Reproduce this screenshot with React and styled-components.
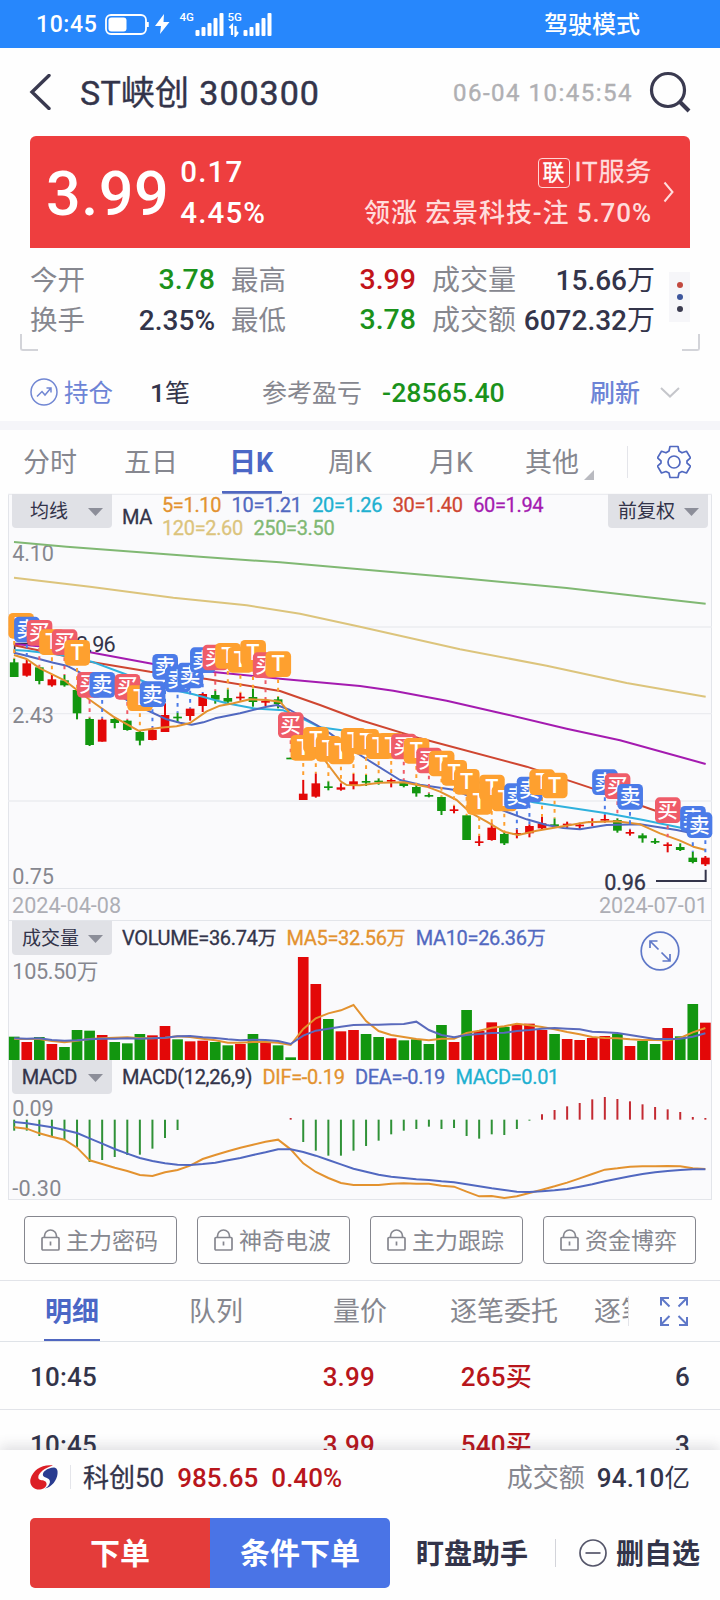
import React from 'react'
import styled, { createGlobalStyle } from 'styled-components';

const GlobalStyle = createGlobalStyle`
    * { box-sizing : border-box; }
    body {
        margin : 0;
        background : #fff;
        font-family : Roboto, "Noto Sans CJK SC", sans-serif;
        color : #33344a;
    }
`

const Page = styled.div`
    width : 720px;
    height : 1600px;
    overflow : hidden;
    display : flex;
    flex-direction : column;
    background : #fefefe;
`

const Txt = styled.span`
    font-size : ${p => p.$size || 26}px;
    font-weight : ${p => p.$weight || 400};
    color : ${p => p.$color || '#33344a'};
    letter-spacing : ${p => p.$ls || 0}px;
    line-height : ${p => p.$lh || 1.2};
    margin-left : ${p => p.$ml || 0}px;
    padding-top : ${p => p.$pt || 0}px;
    -webkit-text-stroke : ${p => p.$stroke || 0}px currentColor;
    white-space : nowrap;
    flex : none;
`

/* ---------- status bar ---------- */
const StatusBar = styled.div`
    height : 48px;
    flex : none;
    background : #2787fc;
    display : flex;
    align-items : center;
    padding : 0 80px 0 36px;
    svg { margin-left : 8px; flex : none; }
`
const Spacer = styled.div`
    flex : 1;
`

/* ---------- header ---------- */
const Header = styled.div`
    height : 88px;
    flex : none;
    display : flex;
    align-items : center;
    padding : 0 29px 0 29px;
`
const SearchIcon = styled.svg`
    margin-left : 16px;
    flex : none;
`

/* ---------- red banner ---------- */
const Banner = styled.div`
    height : 112px;
    flex : none;
    margin : 0 30px;
    border-radius : 6px 6px 0 0;
    background : #ee3e3f;
    display : flex;
    align-items : center;
    padding : 0 16px 0 16px;
`
const BannerCol = styled.div`
    display : flex;
    flex-direction : column;
    align-items : ${p => p.$end ? 'flex-end' : 'flex-start'};
    margin-left : ${p => p.$ml || 0}px;
    padding-top : 2px;
    & > * { height : 41px; display : flex; align-items : center; }
`
const LinkTag = styled.span`
    width : 32px;
    height : 30px;
    border : 1px solid #ffd6d6;
    border-radius : 4px;
    color : #fff;
    font-size : 22px;
    line-height : 28px;
    text-align : center;
    letter-spacing : 0;
    margin-right : 5px;
`

/* ---------- quote stats ---------- */
const Stats = styled.div`
    height : 103px;
    flex : none;
    padding : 12px 20px 0 20px;
    display : grid;
    grid-template-columns : 195px 201px 239px 1fr;
    grid-template-rows : 40px 40px 11px;
`
const Stat = styled.div`
    display : flex;
    align-items : center;
    justify-content : space-between;
    padding-top : 1px;
    padding-left : ${p => p.$pl}px;
`
const More = styled.div`
    grid-column : 4;
    grid-row : 1 / 3;
    margin : 12px 0 0 14px;
    width : 21px;
    height : 50px;
    background : #f6f6f9;
    display : flex;
    flex-direction : column;
    align-items : center;
    justify-content : center;
    gap : 6px;
`
const Dot = styled.i`
    width : 6px;
    height : 6px;
    border-radius : 50%;
    background : ${p => p.$color};
`
const Corner = styled.div`
    grid-row : 3;
    grid-column : ${p => p.$right ? 4 : 1};
    justify-self : ${p => p.$right ? 'end' : 'start'};
    width : 18px;
    height : 17px;
    margin-top : -6px;
    border-bottom : 2px solid #d3d4d9;
    border-${p => p.$right ? 'right' : 'left'} : 2px solid #d3d4d9;
    border-bottom-${p => p.$right ? 'right' : 'left'}-radius : 3px;
`

/* ---------- position row ---------- */
const Position = styled.div`
    height : 70px;
    flex : none;
    display : flex;
    align-items : center;
    padding : 12px 40px 0 30px;
    svg { flex : none; }
`
const Divider = styled.div`
    height : 9px;
    flex : none;
    background : #f5f5f9;
`

/* ---------- period tabs ---------- */
const Periods = styled.div`
    height : 64px;
    flex : none;
    display : flex;
    padding-left : 23px;
    align-items : stretch;
`
const Period = styled.div`
    width : ${p => p.$w}px;
    display : flex;
    svg { margin : 40px 0 0 5px; }
`
const PeriodLabel = styled.span`
    font-size : 27px;
    line-height : 56px;
    padding : 5px ${p => p.$on ? '9px 0 7px' : 0};
    padding-bottom : 0;
    white-space : nowrap;
    color : ${p => p.$on ? '#4b67c6' : '#86878f'};
    font-weight : ${p => p.$on ? 700 : 400};
    border-bottom : ${p => p.$on ? '3px solid #5067c0' : 'none'};
    border-radius : 1px;
`
const VLine = styled.div`
    width : ${p => p.$w || 1}px;
    height : ${p => p.$h}px;
    background : ${p => p.$color || '#e4e5ea'};
    margin-left : ${p => p.$ml || 0}px;
    flex : none;
    align-self : center;
`

/* ---------- charts ---------- */
const Charts = styled.div`
    margin : 0 8px;
    flex : none;
    height : 706px;
    display : flex;
    flex-direction : column;
    background : #fafafc;
    border : 0 solid #e3e5ea;
    border-width : 0 1px 1px 1px;
`
const Panel = styled.div`
    height : ${p => p.$h}px;
    display : grid;
    grid-template-columns : 100%;
    & > * { grid-area : 1 / 1; }
    & > svg { margin-left : -1px; overflow : visible; z-index : 1; }
`
const Legend = styled.div`
    display : flex;
    align-items : flex-start;
    align-self : start;
    padding : 0 3px;
    z-index : 1;
`
const Select = styled.div`
    width : 100px;
    height : 34px;
    flex : none;
    border-radius : 0 0 4px 4px;
    background : #e0e1e6;
    display : flex;
    align-items : center;
    justify-content : flex-end;
    padding-top : 1px;
    padding-right : 9px;
    gap : ${p => p.$gap || 20}px;
    font-size : 19px;
    line-height : 32px;
`
const Values = styled.div`
    display : flex;
    flex-wrap : wrap;
    width : ${p => p.$w}px;
    column-gap : 10.500px;
    margin-left : ${p => p.$ml || 0}px;
    padding-top : ${p => p.$pt || 0}px;
`
const Value = styled.span`
    font-size : 20px;
    line-height : 23px;
    letter-spacing : -.35px;
    white-space : nowrap;
    color : ${p => p.$color || '#33344a'};
    -webkit-text-stroke : .3px ${p => p.$color || '#33344a'};
    small { font-size : 19px; }
`
const Dates = styled.div`
    height : 33px;
    display : flex;
    justify-content : space-between;
    align-items : center;
    padding : 2px 3px 0 3px;
    border-top : 1px solid #e3e5ea;
    border-bottom : 1px solid #e3e5ea;
`
const Expand = styled.svg`
    margin-left : auto;
    margin-right : 28px;
    margin-top : 10px;
`

/* ---------- locked tools ---------- */
const Tools = styled.div`
    height : 80px;
    flex : none;
    display : flex;
    gap : 20px;
    padding : 16px 24px 0 24px;
`
const Tool = styled.div`
    width : 153px;
    height : 48px;
    border : 1px solid #85868e;
    border-radius : 4px;
    display : flex;
    align-items : center;
    justify-content : center;
    gap : 6px;
    padding-right : 2px;
`

/* ---------- detail tabs and trades ---------- */
const DetailTabs = styled.div`
    height : 62px;
    flex : none;
    border-top : 1px solid #e2e4e9;
    border-bottom : 1px solid #dfe3e8;
    display : flex;
    padding-left : 44px;
    overflow : hidden;
`
const DetailTab = styled.div`
    width : ${p => p.$w}px;
    overflow : hidden;
`
const DetailLabel = styled.span`
    display : inline-block;
    height : 61px;
    line-height : 58px;
    padding : 2px ${p => p.$on ? 1 : 0}px 0;
    font-size : 27px;
    white-space : nowrap;
    color : ${p => p.$on ? '#4b67c6' : '#86878f'};
    font-weight : ${p => p.$on ? 700 : 400};
    border-bottom : ${p => p.$on ? '3px solid #5067c0' : 'none'};
`
const Trades = styled.div`
    height : 108px;
    flex : none;
    overflow : hidden;
`
const Trade = styled.div`
    height : 68px;
    border-bottom : 1px solid #e2e4e9;
    display : grid;
    grid-template-columns : 100px 245px 157px 1fr;
    align-items : center;
    padding : 2px 30px 0 30px;
`
const Cell = styled.div`
    font-size : 26px;
    font-weight : 500;
    line-height : 32px;
    letter-spacing : .2px;
    text-align : ${p => p.$align || 'right'};
    color : ${p => p.$color || '#33344a'};
`

/* ---------- bottom bar ---------- */
const Bottom = styled.div`
    flex : 1;
    background : #fefefe;
    box-shadow : 0 -4px 12px rgba(60,60,80,0.16);
    z-index : 2;
`
const IndexRow = styled.div`
    height : 54px;
    display : flex;
    align-items : center;
    padding : 0 30px;
`
const Actions = styled.div`
    height : 70px;
    margin-top : 14px;
    padding-left : 30px;
    display : flex;
    align-items : center;
`
const Order = styled.div`
    width : 180px;
    height : 70px;
    background : ${p => p.$blue ? '#4a74e6' : '#e43c3a'};
    border-radius : ${p => p.$blue ? '0 5px 5px 0' : '5px 0 0 5px'};
    color : #fff;
    font-size : 30px;
    font-weight : 700;
    text-align : center;
    line-height : 71px;
`

const RED = '#e30808';
const GREEN = '#12960f';
const barX = i => 42.6 + 37.7 * i;

// [up, body top, body bottom, high, low]
const candles = [
    [0,517,561,506,561],[1,520,557,508,560],[0,532,573,530,583],[1,568,586,555,590],[0,571,586,555,590],
    [0,600,670,600,688],[0,687,765,683,768],[1,689,755,685,755],[0,687,699,683,715],[0,692,720,690,722],
    [0,726,752,722,766],[1,720,750,712,751],[1,675,726,640,726],[0,680,684,668,698],[1,656,678,655,692],
    [1,612,648,609,666],[0,615,629,603,641],[0,624,635,598,640],[1,620,624,608,632],[0,621,636,596,650],
    [1,633,638,625,648],[0,628,642,620,655],[0,803,807,803,807],[1,911,930,870,930],[1,880,920,850,923],
    [0,889,893,874,901],[1,892,899,880,902],[1,874,888,852,898],[0,873,877,855,888],[0,872,876,865,884],
    [1,870,875,866,892],[0,877,888,870,892],[0,891,910,885,920],[0,915,919,910,922],[0,921,963,920,975],
    [1,958,963,947,970],[0,976,1050,976,1050],[1,1054,1059,1037,1068],[1,1013,1050,1000,1052],[0,1032,1060,1025,1065],
    [1,1029,1033,1018,1045],[1,1008,1030,1003,1042],[1,1000,1015,980,1018],[0,1003,1008,985,1012],[1,1001,1005,995,1015],
    [1,1004,1008,998,1018],[1,994,998,985,1008],[1,987,991,975,998],[0,990,1022,985,1028],[1,1026,1030,1018,1037],
    [0,1036,1045,1030,1058],[0,1053,1056,1045,1062],[1,1063,1067,1058,1087],[0,1071,1080,1060,1083],[0,1103,1116,1085,1120],
    [1,1103,1123,1098,1128],
]

const maLines = [
    ['#80b873', '42,156 200,170 600,200 840,217 1080,238 1380,264 1700,294 1930,320 2117,341'],
    ['#dcc47c', '42,263 270,290 520,323 740,346 900,371 1080,410 1380,478 1640,527 1880,579 2117,620'],
    ['#a41bb0', '42,462 150,472 270,487 460,522 640,546 840,566 1080,588 1180,602 1340,632 1510,671 1700,716 1860,751 2117,822'],
    ['#cf4631', '42,466 150,488 270,515 450,545 620,567 840,603 960,645 1080,690 1260,745 1580,830 1770,893 1960,960 2117,1012'],
    ['#2fb1dd', '42,480 80,482 180,494 275,515 375,552 450,582 520,600 580,613 680,640 760,655 850,661 900,682 960,712 1020,720 1150,740 1260,775 1400,860 1510,910 1600,937 1820,970 1930,990 2050,1015 2117,1030'],
    ['#5168c0', '42,488 80,497 160,518 200,527 235,545 380,630 440,660 500,688 540,698 575,704 610,697 645,685 720,670 800,650 830,645 870,660 950,705 990,730 1080,795 1200,870 1260,884 1360,899 1510,962 1580,988 1640,1005 1690,1014 1740,1018 1820,1005 1920,1003 2030,1020 2117,1038'],
    ['#e3922f', '42,495 80,507 120,535 195,572 270,630 340,680 415,722 480,713 530,709 570,699 620,664 660,647 700,640 750,628 800,630 840,635 870,670 960,790 985,825 1023,875 1040,885 1080,886 1140,878 1210,877 1280,890 1320,905 1370,930 1410,967 1460,995 1510,1025 1555,1035 1610,1022 1680,1010 1760,997 1850,994 1920,1003 1980,1030 2040,1052 2080,1070 2117,1080'],
]

// [bar, kind, top]
const marks = [
    [0,'T',369],[1,'卖',380],[2,'买',390],[3,'T',418],[4,'买',418],[5,'T',450],[6,'买',546],[7,'卖',546],
    [9,'买',552],[10,'T',586],[11,'卖',574],[12,'卖',492],[13,'卖',530],[14,'卖',518],[15,'卖',472],[16,'买',464],
    [17,'T',459],[18,'T',471],[19,'T',450],[20,'买',487],[21,'T',484],[22,'买',667],[23,'T',735],[24,'T',711],
    [25,'T',738],[26,'T',746],[27,'T',714],[28,'T',717],[29,'T',730],[30,'T',729],[31,'买',731],[32,'T',744],
    [33,'买',773],[34,'T',782],[35,'T',810],[36,'T',837],[37,'T',897],[38,'T',854],[39,'T',887],[40,'卖',880],
    [41,'卖',860],[42,'T',838],[43,'T',848],[47,'卖',838],[48,'买',850],[49,'卖',882],[52,'买',922],[54,'卖',948],
    [55,'卖',967],
]
const markColor = { 'T' : '#fea02f', '卖' : '#4b7be8', '买' : '#ef5c69' };

const volumes = [
    [0,560],[1,576],[0,561],[1,582],[0,591],[0,540],[0,542],[1,555],[0,576],[0,580],[0,552],[1,556],[1,528],[0,568],
    [1,574],[1,572],[0,576],[0,586],[1,582],[0,552],[1,576],[0,586],[0,622],[1,321],[1,402],[0,507],[1,544],[1,540],
    [0,552],[0,561],[1,565],[0,571],[0,568],[0,582],[0,525],[1,576],[0,480],[1,543],[1,517],[0,531],[1,525],[1,521],
    [1,540],[0,552],[1,567],[1,570],[1,564],[1,558],[0,551],[1,588],[0,573],[0,582],[1,534],[0,559],[0,462],[1,518],
]
const volMa5 = [567,567,567,573,577,572,567,565,563,562,565,565,563,559,561,566,571,578,578,576,576,578,585,537,505,490,481,465,513,543,555,561,567,571,566,566,549,542,533,529,521,526,531,538,546,553,561,564,565,568,570,570,571,564,547,534];
const volMa10 = [565,566,565,570,572,571,568,566,566,565,566,565,563,559,558,562,564,568,571,569,570,573,582,557,542,536,530,525,524,524,523,522,515,540,555,562,555,552,549,548,543,540,536,534,536,538,545,547,549,555,561,567,567,566,560,550];

const macd = [842,842,858,861,870,891,936,930,921,915,914,896,864,840,0,0,0,0,0,0,0,0,804,876,902,917,917,902,888,872,853,842,837,830,837,834,858,866,853,855,837,812,793,780,769,759,748,741,747,754,763,771,778,786,801,804];
const dif = [832,836,850,860,869,893,931,942,953,963,975,978,967,960,947,927,915,904,893,884,875,869,898,940,966,984,999,1005,1005,1005,1001,1000,1001,1001,1007,1010,1025,1039,1038,1044,1039,1029,1019,1009,998,985,972,959,955,950,949,949,948,949,955,957];
const dea = [816,820,826,832,840,849,865,881,897,911,924,933,940,944,945,942,938,931,924,915,907,898,898,906,917,930,943,956,965,974,980,984,988,990,994,997,1003,1009,1015,1020,1025,1026,1024,1021,1017,1010,1003,994,986,979,972,967,963,960,958,958];

const toPoints = list => list.map((y, i) => `${barX(i)},${y}`).join(' ');

const clampMark = x => Math.min(Math.max(x - 38, 25), 2060);

function KChart() {
    return <svg width="704" height="394" viewBox="24 12 2112 1182">
        {[13, 411, 671, 933].map(y => <line key={y} x1="24" x2="2136" y1={y} y2={y} stroke="#ebecf0" strokeWidth="4" />)}
        <g fontSize="65" fill="#86878f">
            <text x="37" y="213" textLength="125">4.10</text>
            <text x="37" y="698" textLength="125">2.43</text>
            <text x="37" y="1181" textLength="125">0.75</text>
        </g>
        <path d="M44 461H225M44 461v30" stroke="#33344a" strokeWidth="5" fill="none" />
        {candles.map(([up, top, bottom, high, low], i) => <g key={i} fill={up ? RED : GREEN}>
            <rect x={barX(i) - 13} width="26" y={top} height={Math.max(bottom - top, 5)} />
            <rect x={barX(i) - 3} width="6" y={high} height={low - high} />
        </g>)}
        {maLines.map(([color, points]) => <polyline key={color} points={points} fill="none" stroke={color} strokeWidth="6" strokeLinejoin="round" />)}
        <text x="228" y="487" fontSize="65" fill="#33344a" textLength="119">3.96</text>
        {marks.map(([i, kind, top]) => <line key={i} x1={barX(i)} x2={barX(i)} y1={top + 84} y2={candles[i][3]}
            stroke={markColor[kind]} strokeWidth="6" strokeDasharray="11 14" />)}
        {marks.map(([i, kind, top]) => <g key={i}>
            <rect x={clampMark(barX(i))} y={top} width="77" height="77" rx="14" fill={markColor[kind]} />
            <text x={clampMark(barX(i)) + 38} y={top + (kind === 'T' ? 60 : 61)} fontSize={kind === 'T' ? 65 : 62} fontWeight="500"
                textAnchor="middle" fill="#fff">{kind}</text>
        </g>)}
        <path d="M1968 1173H2117V1139" stroke="#33344a" strokeWidth="6" fill="none" />
        <text x="1813" y="1199" fontSize="65" fill="#33344a" stroke="#33344a" textLength="125">0.96</text>
    </svg>
}

function VolumeChart() {
    return <svg width="704" height="139" viewBox="24 213 2112 417">
        <text x="37" y="388" fontSize="65" fill="#86878f" textLength="258">105.50万</text>
        {volumes.map(([up, top], i) => <rect key={i} x={barX(i) - 16} width="32" y={top} height={630 - top} fill={up ? RED : GREEN} />)}
        <polyline points={toPoints(volMa5)} fill="none" stroke="#e3922f" strokeWidth="6" />
        <polyline points={toPoints(volMa10)} fill="none" stroke="#5a6abc" strokeWidth="6" />
    </svg>
}

function MacdChart() {
    return <svg width="704" height="140" viewBox="24 630 2112 420">
        <g fontSize="65" fill="#86878f">
            <text x="37" y="798" textLength="124">0.09</text>
            <text x="37" y="1038" textLength="147">-0.30</text>
        </g>
        {macd.map((end, i) => end > 0 && <line key={i} x1={barX(i)} x2={barX(i)} y1="809" y2={end} stroke={end < 809 ? '#c32a32' : '#2f9137'} strokeWidth="6" />)}
        <polyline points={toPoints(dif)} fill="none" stroke="#e3922f" strokeWidth="6" />
        <polyline points={toPoints(dea)} fill="none" stroke="#5168c0" strokeWidth="6" />
    </svg>
}

const Arrow = () => <svg width="15" height="8" viewBox="0 0 15 8"><path d="M0 0H15L7.500 8Z" fill="#8c8e99" /></svg>

const Lock = () => <svg width="19" height="22" viewBox="0 0 19 22" fill="none" stroke="#86878f" strokeWidth="1.7">
    <rect x="1" y="8.500" width="17" height="12.500" rx="1" />
    <path d="M3.500 8.500V7a6 6 0 0 1 12 0V8.500M9.500 12.500v4" />
</svg>

const Signal = () => <g fill="#fff">
    <rect x="0" y="17" width="4" height="6" rx="1" />
    <rect x="6" y="14" width="4" height="9" rx="1" />
    <rect x="12" y="10" width="4" height="13" rx="1" />
    <rect x="18" y="5" width="4" height="18" rx="1" />
    <rect x="24" y="0" width="4" height="23" rx="1" />
</g>

const periods = [['分时', 101], ['五日', 98], ['日K', 106], ['周K', 101], ['月K', 96], ['其他', 100]];
const tabs = [['明细', 145], ['队列', 144], ['量价', 117], ['逐笔委托', 144], ['逐笔明细', 34]];
const trades = [['10:45', '3.99', '265买', '6'], ['10:45', '3.99', '540买', '3']];

function App() {
    return <Page>
        <GlobalStyle />
        <StatusBar>
            <Txt $size={23} $weight={500} $color="#fff" $ls={.6} $pt={1}>10:45</Txt>
            <svg width="44" height="21" viewBox="0 0 44 21">
                <rect x="1" y="1" width="40" height="19" rx="5" fill="none" stroke="#fff" strokeWidth="1.8" />
                <rect x="3.500" y="3.500" width="18" height="14" rx="3" fill="#fff" />
                <path d="M42.500 8v5" stroke="#fff" strokeWidth="2.500" />
            </svg>
            <svg width="16" height="20" viewBox="0 0 16 20" style={{ marginLeft : 6 }}><path d="M9 0L0 12H6L5 20L14.500 8H8.500Z" fill="#fff" /></svg>
            <svg width="96" height="26" viewBox="0 0 96 26" fill="#fff">
                <text x=".5" y="10" fontSize="11.500" fontWeight="500">4G</text>
                <g transform="translate(16.500 2)"><Signal /></g>
                <text x="48.500" y="10" fontSize="11.500" fontWeight="500">5G</text>
                <path d="M50.500 17l2.500-2.500V24M59 21L56.500 24.500V15" fill="none" stroke="#fff" strokeWidth="2.200" />
                <g transform="translate(64.500 2)"><Signal /></g>
            </svg>
            <Spacer />
            <Txt $size={24} $color="#fff" $weight={500} $pt={2}>驾驶模式</Txt>
        </StatusBar>

        <Header>
            <svg width="22" height="36" viewBox="0 0 22 36"><path d="M20 1.500L3 18L20 34.500" fill="none" stroke="#3a3a50" strokeWidth="3.400" strokeLinecap="round" /></svg>
            <Txt $size={34} $ml={29} $pt={2} $ls={.2} $stroke={.4}>ST峡创</Txt>
            <Txt $size={34} $ml={10} $ls={1} $pt={2} $stroke={.5}>300300</Txt>
            <Spacer />
            <Txt $size={24} $color="#b0b0b3" $ls={1.5} $pt={3} $stroke={.4}>06-04 10:45:54</Txt>
            <SearchIcon width="42" height="42" viewBox="0 0 42 42" fill="none" stroke="#3a3a50" strokeWidth="3.200">
                <circle cx="19" cy="19" r="16.500" />
                <path d="M31 31L40 40" strokeWidth="4" />
            </SearchIcon>
        </Header>

        <Banner>
            <Txt $size={61} $color="#fff" $weight={500} $ls={.6} $pt={6}>3.99</Txt>
            <BannerCol $ml={11}>
                <Txt $size={29.5} $color="#fff" $ls={1.1} $weight={500}>0.17</Txt>
                <Txt $size={29.5} $color="#fff" $ls={1.1} $weight={500}>4.45%</Txt>
            </BannerCol>
            <Spacer />
            <BannerCol $end>
                <Txt $size={26} $color="#ffdcdc" $ls={.8} $stroke={.3}><LinkTag>联</LinkTag>IT服务</Txt>
                <Txt $size={26} $color="#ffdcdc" $weight={500} $ls={.9}>领涨&nbsp;宏景科技-注&nbsp;5.70%</Txt>
            </BannerCol>
            <svg width="11" height="22" viewBox="0 0 11 22" style={{ marginLeft : 11 }}><path d="M1.500 1.500L9.500 11L1.500 20.500" fill="none" stroke="#ffdcdc" strokeWidth="2" /></svg>
        </Banner>

        <Stats>
            <Stat $pl={10}><Txt $size={27.5} $color="#86878f">今开</Txt><Txt $size={28.5} $weight={500} $color="#1b921b">3.78</Txt></Stat>
            <Stat $pl={16}><Txt $size={27.5} $color="#86878f">最高</Txt><Txt $size={28.5} $weight={500} $color="#c2141a">3.99</Txt></Stat>
            <Stat $pl={16}><Txt $size={28} $color="#86878f">成交量</Txt><Txt $size={28} $weight={500}>15.66<Txt $size={28}>万</Txt></Txt></Stat>
            <Stat $pl={10}><Txt $size={27.5} $color="#86878f">换手</Txt><Txt $size={28} $weight={500}>2.35%</Txt></Stat>
            <Stat $pl={16}><Txt $size={27.5} $color="#86878f">最低</Txt><Txt $size={28.5} $weight={500} $color="#1b921b">3.78</Txt></Stat>
            <Stat $pl={16}><Txt $size={28} $color="#86878f">成交额</Txt><Txt $size={28} $weight={500}>6072.32<Txt $size={28}>万</Txt></Txt></Stat>
            <More><Dot $color="#c2493f" /><Dot $color="#3c559c" /><Dot $color="#3b3b50" /></More>
            <Corner />
            <Corner $right />
        </Stats>

        <Position>
            <svg width="28" height="28" viewBox="0 0 28 28" fill="none" stroke="#7187d3" strokeWidth="1.500">
                <circle cx="14" cy="14" r="13" />
                <path d="M7 18.500L12 13.500L15 17L20.500 10.500M16.500 10H21V14.500" />
            </svg>
            <Txt $size={24.5} $color="#6d84d6" $ml={6} $pt={3}>持仓</Txt>
            <Txt $size={26.5} $weight={500} $ml={37} $pt={2}>1<Txt $size={25}>笔</Txt></Txt>
            <Txt $size={25} $color="#86878f" $ml={72} $pt={3}>参考盈亏</Txt>
            <Txt $size={26.7} $weight={500} $color="#1b921b" $ml={20} $pt={2}>-28565.40</Txt>
            <Spacer />
            <Txt $size={25} $weight={500} $color="#6d84d6" $pt={3}>刷新</Txt>
            <svg width="20" height="11" viewBox="0 0 20 11" style={{ marginLeft : 20 }}><path d="M1 1L10 9.500L19 1" fill="none" stroke="#c5c6cb" strokeWidth="2" /></svg>
        </Position>
        <Divider />

        <Periods>
            {periods.map(([name, w], i) => <Period key={name} $w={w}>
                <PeriodLabel $on={i === 2}>{name}</PeriodLabel>
                {i === 5 && <svg width="10" height="10" viewBox="0 0 10 10"><path d="M10 0V10H0Z" fill="#b9bac0" /></svg>}
            </Period>)}
            <VLine $h={32} $ml={2} />
            <svg width="34" height="64" viewBox="0 0 34 64" fill="none" stroke="#5068c0" strokeWidth="1.700" strokeLinejoin="round" style={{ marginLeft : 29 }}>
                <path d="M13 16.500h8l1 4.500 3 1.800 4.500-1.500 4 6.500-3.500 3.200v2l3.500 3.200-4 6.800-4.500-1.500-3 1.500-1 4.500h-8l-1-4.500-3-1.500-4.500 1.500-4-6.800 3.500-3.200v-2L.500 27.800l4-6.500L9 22.800l3-1.800Z" />
                <circle cx="17" cy="32" r="6" />
            </svg>
        </Periods>

        <Charts>
            <Panel $h={394}>
                <KChart />
                <Legend>
                    <Select>均线<Arrow /></Select>
                    <Values $ml={10} $pt={12}><Value>MA</Value></Values>
                    <Values $w={430} $ml={10}>
                        <Value $color="#e3922f">5=1.10</Value>
                        <Value $color="#5168c0">10=1.21</Value>
                        <Value $color="#20b0d0">20=1.26</Value>
                        <Value $color="#cf4631">30=1.40</Value>
                        <Value $color="#a41bb0">60=1.94</Value>
                        <Value $color="#dcc47c">120=2.60</Value>
                        <Value $color="#80b873">250=3.50</Value>
                    </Values>
                    <Spacer />
                    <Select $gap={9}>前复权<Arrow /></Select>
                </Legend>
            </Panel>
            <Dates>
                <Txt $size={21.6} $color="#adaeb5">2024-04-08</Txt>
                <Txt $size={21.6} $color="#adaeb5">2024-07-01</Txt>
            </Dates>
            <Panel $h={139}>
                <VolumeChart />
                <Legend>
                    <Select $gap={9}>成交量<Arrow /></Select>
                    <Values $ml={10} $w={450} $pt={6}>
                        <Value>VOLUME=36.74<small>万</small></Value>
                        <Value $color="#e3922f">MA5=32.56<small>万</small></Value>
                        <Value $color="#5168c0">MA10=26.36<small>万</small></Value>
                    </Values>
                    <Expand width="40" height="40" viewBox="0 0 40 40" fill="none" stroke="#5f78c8" strokeWidth="1.700">
                        <circle cx="20" cy="20" r="18.800" />
                        <path d="M18.500 18.500L10 10M10 17V10H17.500M21.500 21.500L30 30M30 23V30H22.500" />
                    </Expand>
                </Legend>
            </Panel>
            <Panel $h={139}>
                <MacdChart />
                <Legend>
                    <Select $gap={11}><Value>MACD</Value><Arrow /></Select>
                    <Values $ml={10} $w={480} $pt={6}>
                        <Value>MACD(12,26,9)</Value>
                        <Value $color="#e3922f">DIF=-0.19</Value>
                        <Value $color="#5168c0">DEA=-0.19</Value>
                        <Value $color="#20b0d0">MACD=0.01</Value>
                    </Values>
                </Legend>
            </Panel>
        </Charts>

        <Tools>
            {['主力密码', '神奇电波', '主力跟踪', '资金博弈'].map(name => <Tool key={name}>
                <Lock />
                <Txt $size={23} $color="#86878f" $pt={3}>{name}</Txt>
            </Tool>)}
        </Tools>

        <DetailTabs>
            {tabs.map(([name, w], i) => <DetailTab key={name} $w={w}>
                <DetailLabel $on={i === 0}>{name}</DetailLabel>
            </DetailTab>)}
            <VLine $h={30} />
            <svg width="28" height="60" viewBox="0 0 28 60" fill="none" stroke="#5f78c8" strokeWidth="2" style={{ marginLeft : 31 }}>
                <path d="M9.500 25.500L1 17M1 24.500V17H9M18.500 25.500L27 17M19 17H27V24.500M9.500 35L1 43.500M1 36V44H9M18.500 35L27 43.500M19 44H27V36" />
            </svg>
        </DetailTabs>
        <Trades>
            {trades.map(([time, price, amount, count]) => <Trade key={amount}>
                <Cell $align="left">{time}</Cell>
                <Cell $color="#b8161c">{price}</Cell>
                <Cell $color="#b8161c">{amount}</Cell>
                <Cell>{count}</Cell>
            </Trade>)}
        </Trades>

        <Bottom>
            <IndexRow>
                <svg width="28" height="25" viewBox="0 0 28 25">
                    <path d="M23 .500C12-1 3 5 .500 14C-1 20 4 25 10 24.500C16 24 18 19 15.500 16.500C13 14.500 10 16 8.500 13.500C7 9 14 3 23 .500Z" fill="#dc1f26" />
                    <path d="M24 2.500C17 3 12 7 13 10.500C14 13 17.500 12 19.500 15C21 18 18 22 15 23.500C22 22 27 15 27.500 9C28 5.500 27 3 24 2.500Z" fill="#2a3c90" />
                </svg>
                <VLine $h={24} $ml={12} />
                <Txt $size={26} $ml={12} $pt={3} $stroke={.3}>科创50</Txt>
                <Txt $size={26} $weight={500} $color="#b8161c" $ml={13} $pt={3}>985.65</Txt>
                <Txt $size={26} $weight={500} $color="#b8161c" $ml={13} $pt={3}>0.40%</Txt>
                <Spacer />
                <Txt $size={26} $color="#86878f" $pt={3}>成交额</Txt>
                <Txt $size={26} $weight={500} $ml={12} $ls={.3} $pt={3}>94.10<Txt $size={25.5}>亿</Txt></Txt>
            </IndexRow>
            <Actions>
                <Order>下单</Order>
                <Order $blue>条件下单</Order>
                <Txt $size={28} $weight={700} $ml={26} $pt={3}>盯盘助手</Txt>
                <VLine $h={28} $ml={27} $color="#d3d4da" />
                <svg width="28" height="28" viewBox="0 0 28 28" fill="none" stroke="#55566a" strokeWidth="1.700" style={{ marginLeft : 23 }}>
                    <circle cx="14" cy="14" r="13" />
                    <path d="M6.500 14H21.500" />
                </svg>
                <Txt $size={28} $weight={700} $ml={9} $pt={3}>删自选</Txt>
            </Actions>
        </Bottom>
    </Page>
}

export default App
